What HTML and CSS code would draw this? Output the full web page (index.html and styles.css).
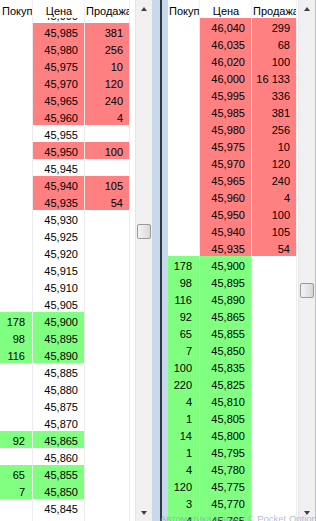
FILE: index.html
```html
<!DOCTYPE html>
<html lang="ru">
<head>
    <meta charset="UTF-8">
    <title>Стакан цен</title>
    <link rel="stylesheet" href="styles.css">
</head>
<body>
    <div class="screen">
        <div class="panel panel-left">
            <div class="grid">
                <div class="head">
                    <div class="hcell c1">Покупка</div>
                    <div class="hcell c2">Цена</div>
                    <div class="hcell c3">Продажа</div>
                </div>
                <div class="body">
                    <div class="rows scrolled" id="leftRows"></div>
                </div>
            </div>
            <div class="scrollbar">
                <div class="arrow arrow-up"></div>
                <div class="track"><div class="thumb thumb-left"></div></div>
                <div class="arrow arrow-down"></div>
            </div>
        </div>
        <div class="divider"><div class="divider-line"></div></div>
        <div class="panel panel-right">
            <div class="grid">
                <div class="head">
                    <div class="hcell c1">Покупка</div>
                    <div class="hcell c2">Цена</div>
                    <div class="hcell c3">Продажа</div>
                </div>
                <div class="body">
                    <div class="rows" id="rightRows"></div>
                </div>
            </div>
            <div class="scrollbar">
                <div class="arrow arrow-up"></div>
                <div class="track"><div class="thumb thumb-right"></div></div>
                <div class="arrow arrow-down"></div>
            </div>
        </div>
        <div class="watermark">Автоматика маркет © Pocket Option</div>
    </div>
    <script>
        // левый стакан: шаг цены 0,005
        const leftSell = { 45985: 381, 45980: 256, 45975: 10, 45970: 120, 45965: 240, 45960: 4, 45950: 100, 45940: 105, 45935: 54 };
        const leftBuy = { 45900: 178, 45895: 98, 45890: 116, 45865: 92, 45855: 65, 45850: 7 };

        const leftData = [];
        for (let p = 45990; p >= 45840; p -= 5) {
            leftData.push({ price: p, buy: leftBuy[p], sell: leftSell[p] });
        }

        // правый стакан: только уровни с объёмом
        const rightData = [
            [46040, null, 299], [46035, null, 68], [46020, null, 100], [46000, null, '16 133'],
            [45995, null, 336], [45985, null, 381], [45980, null, 256], [45975, null, 10],
            [45970, null, 120], [45965, null, 240], [45960, null, 4], [45950, null, 100],
            [45940, null, 105], [45935, null, 54],
            [45900, 178], [45895, 98], [45890, 116], [45865, 92], [45855, 65], [45850, 7],
            [45835, 100], [45825, 220], [45810, 4], [45805, 1], [45800, 14], [45795, 1],
            [45780, 4], [45775, 120], [45770, 3], [45765, 4]
        ].map(r => ({ price: r[0], buy: r[1], sell: r[2] }));

        function fmt(p) {
            const s = String(p);
            return s.slice(0, 2) + ',' + s.slice(2);
        }

        function render(el, data) {
            el.innerHTML = data.map(r => {
                const side = r.sell ? 'sell' : (r.buy ? 'buy' : '');
                return `<div class="row">` +
                    `<div class="cell c1 ${r.buy ? 'buy' : ''}">${r.buy || ''}</div>` +
                    `<div class="cell c2 ${side}">${fmt(r.price)}</div>` +
                    `<div class="cell c3 ${r.sell ? 'sell' : ''}">${r.sell || ''}</div>` +
                    `</div>`;
            }).join('');
        }

        render(document.getElementById('leftRows'), leftData);
        render(document.getElementById('rightRows'), rightData);
    </script>
</body>
</html>
```

FILE: styles.css
```css
body {
    margin: 0;
    background: #c9d9ec;
    font-family: 'Liberation Sans', Arial, sans-serif;
    font-size: 11px;
    color: #000;
}
.screen {
    display: flex;
    width: 316px;
    height: 521px;
    overflow: hidden;
    position: relative;
}
.panel {
    display: flex;
    height: 521px;
    background: #fff;
    overflow: hidden;
}
.panel-left {
    width: 152px;
}
.panel-right {
    width: 147px;
    border-right: 1px solid #b4c6dc;
}
.grid {
    flex: 1;
    display: flex;
    flex-direction: column;
    overflow: hidden;
}
.head {
    display: flex;
    flex: none;
    height: 18px;
    background: #fff;
}
.hcell {
    box-sizing: border-box;
    height: 18px;
    padding: 5px 0 0 1px;
    line-height: 13px;
    text-align: center;
    white-space: nowrap;
    overflow: hidden;
    border-right: 1px solid #f0f0f0;
}
.body {
    flex: 1;
    overflow: hidden;
}
.rows.scrolled {
    margin-top: -12px;
}
.row {
    display: flex;
    height: 17px;
}
.cell {
    box-sizing: border-box;
    height: 17px;
    padding: 4px 6px 0 0;
    line-height: 13px;
    text-align: right;
    white-space: nowrap;
    overflow: hidden;
    border-right: 1px solid #ececec;
}
.c1 {
    width: 32px;
    padding-right: 7px;
}
.c2 {
    width: 52px;
}
.c3 {
    width: 45px;
}
.panel-left .c1 {
    width: 33px;
}
.panel-left .hcell.c1 {
    padding-left: 2px;
}
.buy {
    background: #80ff80;
}
.sell {
    background: #ff8080;
}
.scrollbar {
    flex: none;
    width: 17px;
    display: flex;
    flex-direction: column;
    background: #f0f0f0;
    border-left: 1px solid #e6e6e6;
    box-sizing: border-box;
}
.arrow {
    height: 17px;
    flex: none;
    display: flex;
    align-items: center;
    justify-content: center;
}
.arrow::before {
    content: "";
    border-left: 3.5px solid transparent;
    border-right: 3.5px solid transparent;
}
.arrow-up::before {
    border-bottom: 4px solid #404040;
}
.arrow-down::before {
    border-top: 4px solid #404040;
}
.track {
    flex: 1;
}
.thumb {
    width: 14px;
    height: 15px;
    margin-left: 1px;
    box-sizing: border-box;
    border: 1px solid #9a9a9a;
    border-radius: 2px;
    background: linear-gradient(to right, #f4f4f4, #e6e6e6 50%, #d8d8d8);
}
.thumb-left {
    margin-top: 207px;
}
.thumb-right {
    margin-top: 266px;
}
.divider {
    width: 16px;
    flex: none;
    box-sizing: border-box;
    padding-left: 8px;
    background: #c9d9ec;
}
.divider-line {
    width: 2px;
    height: 100%;
    background: #2f3a46;
}
.watermark {
    position: absolute;
    left: 160px;
    bottom: -3px;
    font-size: 9.5px;
    color: rgba(140, 160, 195, 0.7);
    white-space: nowrap;
}
```
